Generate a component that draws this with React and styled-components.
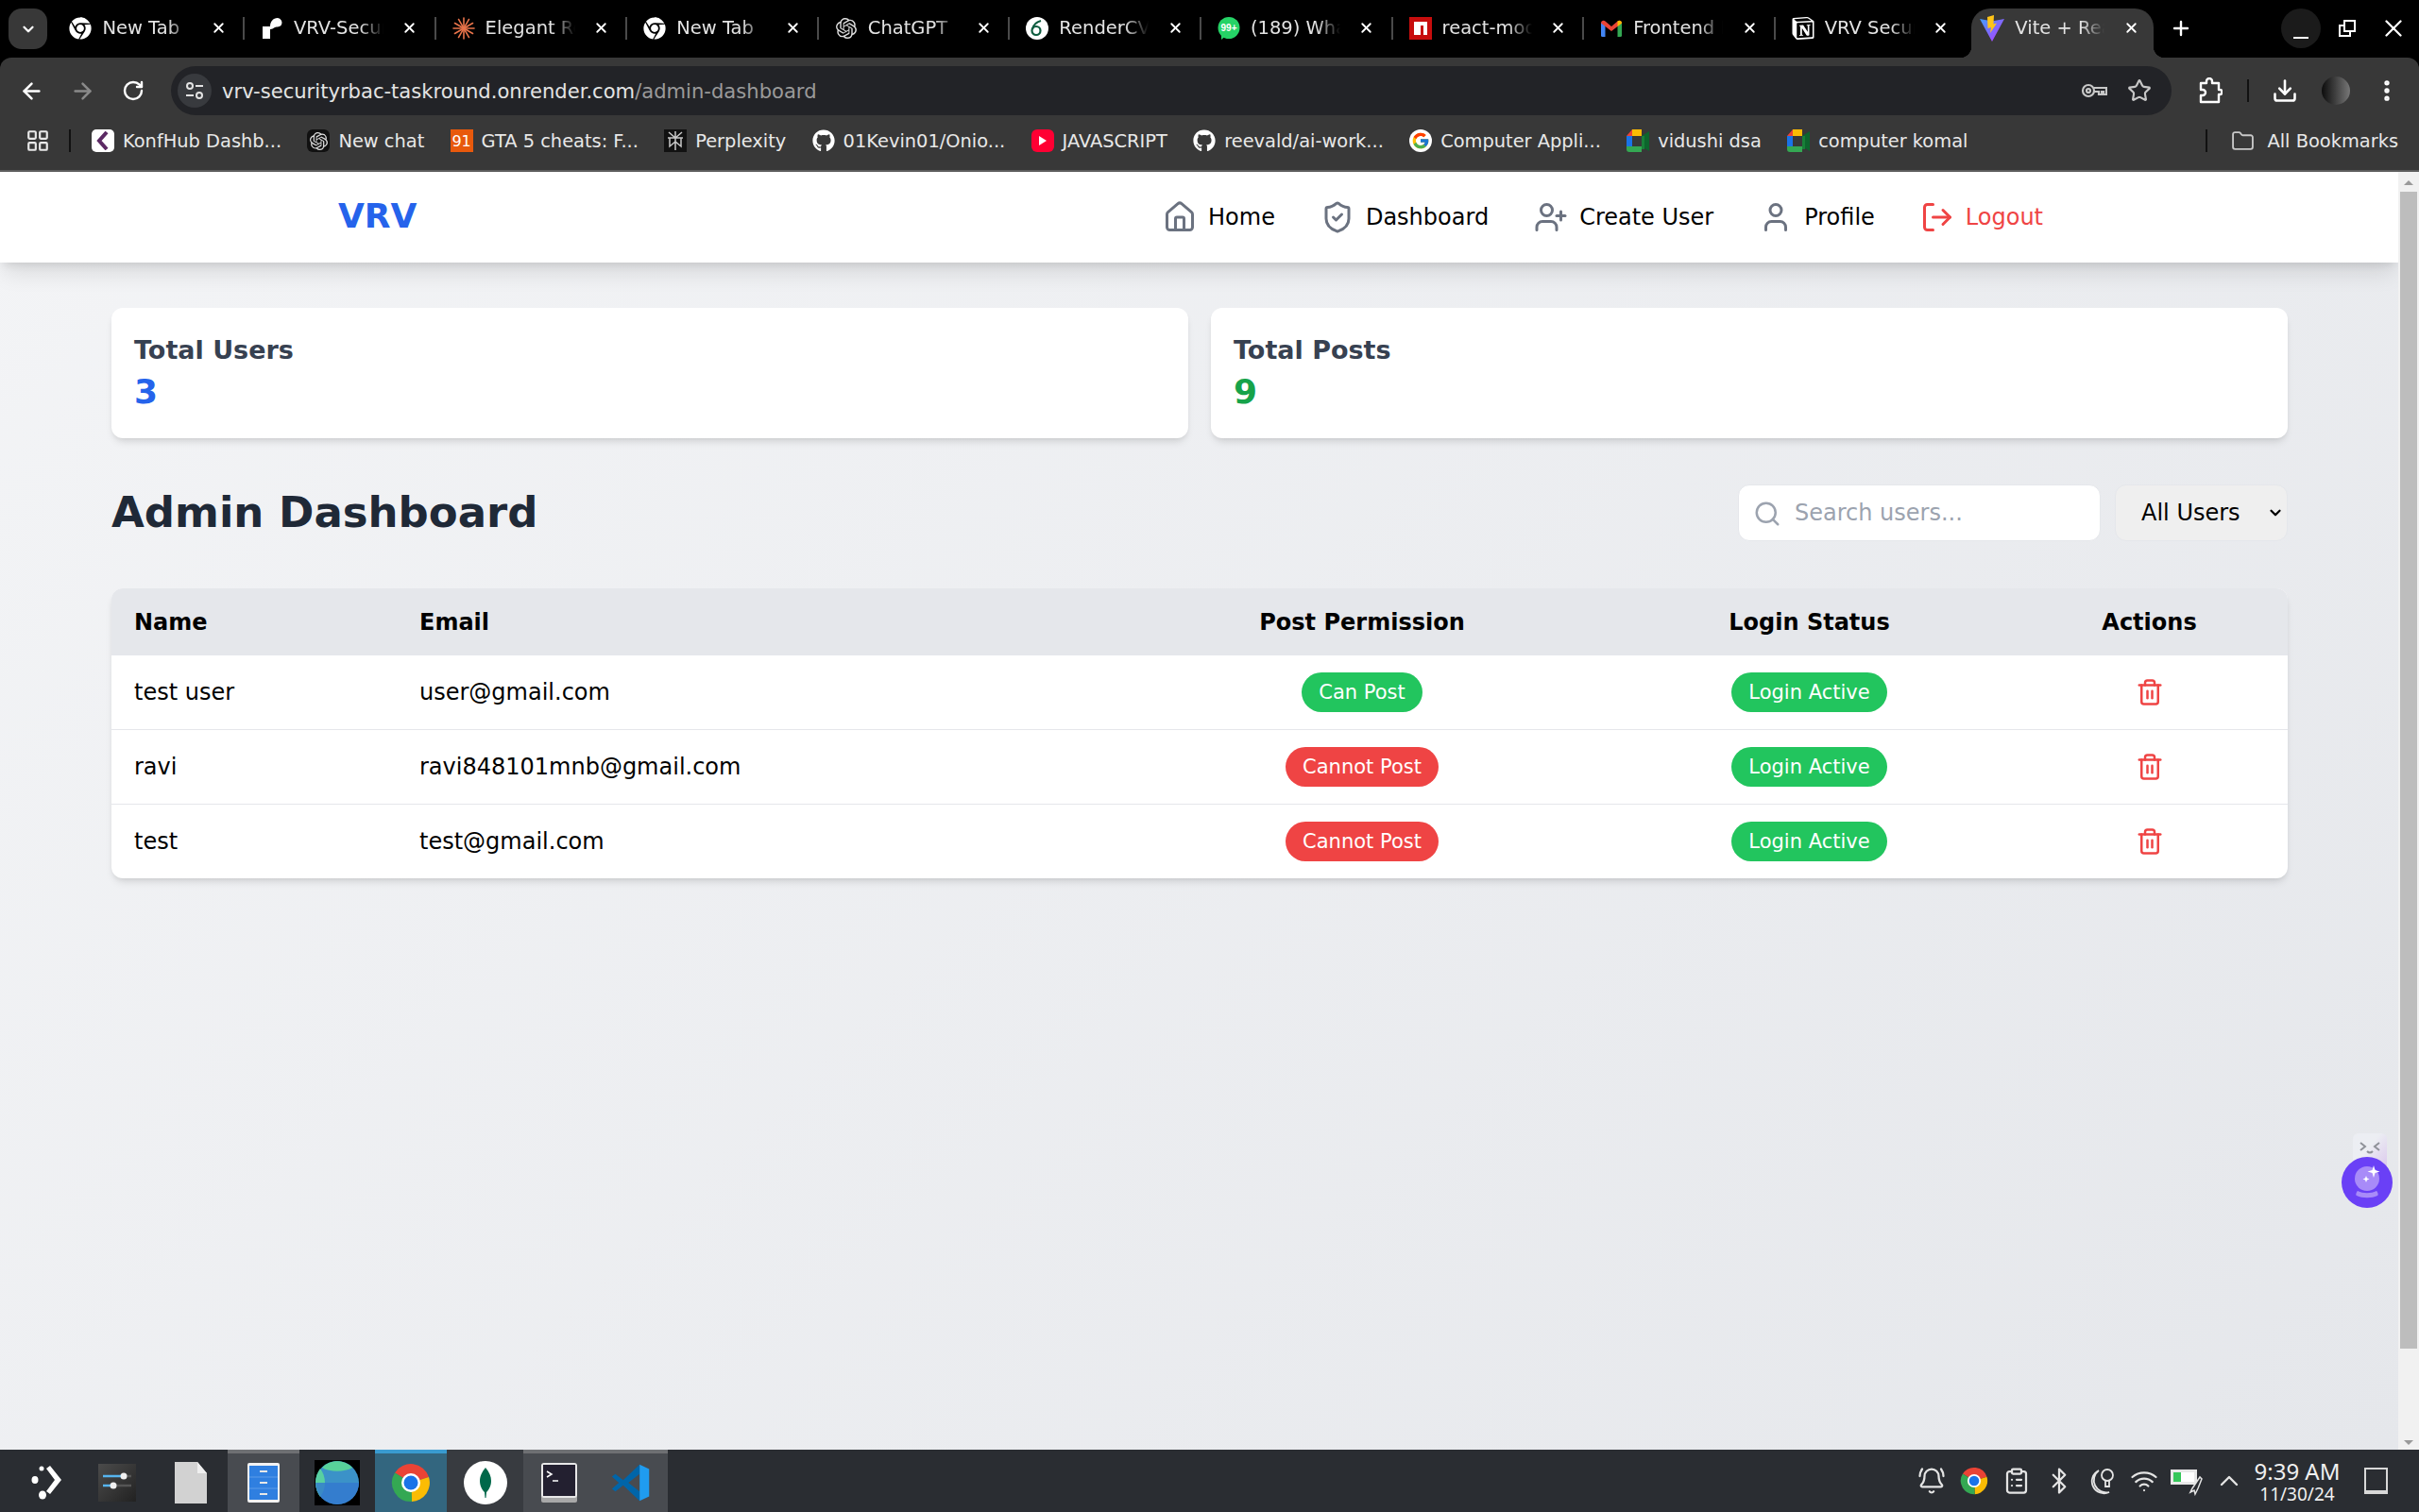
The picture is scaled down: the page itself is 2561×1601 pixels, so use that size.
import React from "react";
import styled, { createGlobalStyle } from "styled-components";
import {
	ArrowLeft,
	ArrowRight,
	BellRing,
	Bluetooth,
	ChevronDown,
	ChevronUp,
	ClipboardList,
	Download,
	Folder,
	House,
	LayoutGrid,
	LogOut,
	MoreVertical,
	Plus,
	RotateCw,
	Search,
	ShieldCheck,
	Star,
	Trash2,
	User,
	UserPlus,
	Wifi,
	X
} from "lucide-react";
import { FaChrome, FaGithub } from "react-icons/fa";
import { FcGoogle } from "react-icons/fc";
import { SiNotion, SiOpenai } from "react-icons/si";

const GlobalStyle = createGlobalStyle`
	html, body {
		margin: 0;
		padding: 0;
		background: #000;
		overflow: hidden;
	}
	* {
		box-sizing: border-box;
	}
`;

const Screen = styled.div`
	display: flex;
	flex-direction: column;
	width: 2561px;
	height: 1601px;
	overflow: hidden;
	font-family: "DejaVu Sans", sans-serif;
`;

/* browser chrome */
const TabStrip = styled.div`
	display: flex;
	align-items: stretch;
	height: 61px;
	padding: 0 6px 0 9px;
	background: #000;
`;
const TabListButton = styled.div`
	display: flex;
	align-items: center;
	justify-content: center;
	width: 41px;
	height: 43px;
	margin: 9px 6.4px 0 0;
	border-radius: 14px;
	background: #383838;
	color: #fff;
`;
const Tab = styled.div`
	position: relative;
	display: flex;
	align-items: center;
	flex: 0 0 202.6px;
	padding: 0 0 2px ${props => (props.$active ? "14px" : "17px")};
	color: #e3e3e3;
	font-size: 19.5px;
`;
const ActiveTabShape = styled.div`
	position: absolute;
	top: 9px;
	bottom: 0;
	left: 5px;
	right: 5px;
	border-radius: 20px 20px 0 0;
	background: #383838;
	&::before,
	&::after {
		content: "";
		position: absolute;
		bottom: 0;
		width: 12px;
		height: 12px;
	}
	&::before {
		left: -12px;
		background: radial-gradient(circle at 0 0, #000 12px, #383838 12.5px);
	}
	&::after {
		right: -12px;
		background: radial-gradient(circle at 100% 0, #000 12px, #383838 12.5px);
	}
`;
const TabIcon = styled.div`
	position: relative;
	display: flex;
	align-items: center;
	justify-content: center;
	flex: 0 0 24px;
	height: 24px;
`;
const TabTitle = styled.div`
	position: relative;
	flex: 0 0 97px;
	margin-left: 11px;
	overflow: hidden;
	white-space: nowrap;
	mask-image: linear-gradient(to right, #000 72%, transparent 98%);
`;
const TabClose = styled.div`
	position: relative;
	display: flex;
	align-items: center;
	justify-content: center;
	flex: 0 0 20px;
	margin-left: 16px;
	color: #fff;
`;
const TabSeparator = styled.div`
	width: 2px;
	height: 24px;
	margin-left: auto;
	background: ${props => (props.$hidden ? "transparent" : "#4a4a4a")};
`;
const NewTab = styled.div`
	display: flex;
	align-items: center;
	justify-content: center;
	width: 48px;
	padding-bottom: 2px;
	color: #fff;
`;
const WindowButtons = styled.div`
	display: flex;
	margin-left: auto;
	padding-top: 9px;
`;
const WindowButton = styled.div`
	display: flex;
	align-items: ${props => (props.$min ? "flex-end" : "center")};
	justify-content: center;
	width: 42px;
	height: 42px;
	margin-left: 7px;
	padding-bottom: ${props => (props.$min ? "10px" : "0")};
	border-radius: 50%;
	background: ${props => (props.$min ? "#1b1b1b" : "transparent")};
	color: #fff;
`;
const MinimizeLine = styled.div`
	width: 16px;
	height: 2px;
	background: #fff;
`;

const Toolbar = styled.div`
	display: flex;
	align-items: center;
	height: 61px;
	padding: 9px 7px 0 6px;
	border-radius: 12px 12px 0 0;
	background: #383838;
`;
const ToolButton = styled.div`
	display: flex;
	align-items: center;
	justify-content: center;
	flex: 0 0 54px;
	color: ${props => props.$color || "#fff"};
`;
const AddressBar = styled.div`
	display: flex;
	align-items: center;
	flex: 1;
	height: 52px;
	margin: 0 14px 0 13px;
	padding: 0 21px 0 7px;
	border-radius: 26px;
	background: #222327;
`;
const SiteInfo = styled.div`
	display: flex;
	align-items: center;
	justify-content: center;
	flex: 0 0 36px;
	height: 36px;
	border-radius: 50%;
	background: #383a3e;
`;
const Url = styled.div`
	flex: 1;
	margin-left: 11px;
	color: #e3e3e3;
	font-size: 21.1px;
	white-space: nowrap;
`;
const UrlPath = styled.span`
	color: #9a9a9a;
`;
const AddressAction = styled.div`
	display: flex;
	align-items: center;
	margin-left: 21px;
	color: #c7c7c7;
`;
const ToolbarDivider = styled.div`
	flex: 0 0 2px;
	height: 24px;
	margin: 0 11px 0 12px;
	background: #111;
`;
const Avatar = styled.div`
	width: 30px;
	height: 30px;
	border-radius: 50%;
	background: linear-gradient(to right, #0c0c0c, #777);
`;

const BookmarksBar = styled.div`
	display: flex;
	align-items: center;
	height: 60px;
	padding: 0 22px 4px 27px;
	border-bottom: 2px solid #5e5e5e;
	background: #383838;
	color: #e8e8e8;
	font-size: 19.4px;
`;
const BarDivider = styled.div`
	flex: 0 0 2px;
	height: 24px;
	margin: ${props => props.$margin};
	background: #111;
`;
const Bookmark = styled.div`
	display: flex;
	align-items: center;
	gap: 9px;
	margin-right: 27.3px;
	white-space: nowrap;
`;
const BookmarkIcon = styled.div`
	display: flex;
	align-items: center;
	justify-content: center;
	flex: 0 0 24px;
	height: 24px;
	border-radius: ${props => props.$radius || "0"};
	background: ${props => props.$bg || "transparent"};
	color: ${props => props.$color || "#fff"};
	font-size: ${props => props.$size || "inherit"};
`;
const AllBookmarks = styled.div`
	display: flex;
	align-items: center;
	margin-left: auto;
	gap: 13px;
	color: #c7c7c7;
`;
const AllBookmarksLabel = styled.span`
	color: #e8e8e8;
`;

/* page */
const Viewport = styled.div`
	position: relative;
	display: flex;
	flex: 1;
	min-height: 0;
`;
const Page = styled.div`
	flex: 1;
	min-width: 0;
	background: linear-gradient(135deg, #f3f4f6, #e5e7eb);
`;
const Navbar = styled.nav`
	display: flex;
	align-items: center;
	height: 96px;
	padding: 0 376px 0 358px;
	background: #fff;
	box-shadow: 0 15px 22px -4px rgba(0, 0, 0, 0.1), 0 6px 9px -4px rgba(0, 0, 0, 0.1);
`;
const Logo = styled.div`
	padding-bottom: 3px;
	color: #2563eb;
	font-size: 36px;
	font-weight: 700;
`;
const NavLinks = styled.div`
	display: flex;
	align-items: center;
	gap: 48px;
	margin-left: auto;
`;
const NavLink = styled.div`
	display: flex;
	align-items: center;
	gap: 12px;
	color: ${props => (props.$danger ? "#ef4444" : "#000")};
	font-size: 24px;
	svg {
		color: ${props => (props.$danger ? "#ef4444" : "#6b7280")};
	}
`;
const Main = styled.main`
	padding: 48px 117px 0 118px;
`;
const Stats = styled.div`
	display: grid;
	grid-template-columns: 1fr 1fr;
	gap: 24px;
	margin-bottom: 49px;
`;
const StatCard = styled.div`
	height: 138px;
	padding: 24px;
	border-radius: 12px;
	background: #fff;
	box-shadow: 0 6px 9px -2px rgba(0, 0, 0, 0.1), 0 3px 6px -3px rgba(0, 0, 0, 0.1);
`;
const StatTitle = styled.div`
	color: #374151;
	font-size: 27px;
	font-weight: 700;
	line-height: 41px;
`;
const StatValue = styled.div`
	color: ${props => props.$color};
	font-size: 36px;
	font-weight: 700;
	line-height: 48px;
`;
const HeaderRow = styled.div`
	display: flex;
	align-items: center;
	justify-content: space-between;
	margin-bottom: 50px;
`;
const Heading = styled.h1`
	margin: 0;
	padding-bottom: 2px;
	color: #1f2937;
	font-size: 45px;
	font-weight: 700;
`;
const Filters = styled.div`
	display: flex;
	gap: 15px;
`;
const SearchBox = styled.div`
	position: relative;
	width: 384px;
	height: 60px;
`;
const SearchIcon = styled.div`
	position: absolute;
	top: 16px;
	left: 16px;
	display: flex;
	color: #9ca3af;
`;
const SearchInput = styled.input`
	width: 100%;
	height: 100%;
	padding: 0 18px 0 59px;
	border: 1.5px solid #e5e7eb;
	border-radius: 12px;
	outline: none;
	background: #fff;
	color: #000;
	font-family: inherit;
	font-size: 24px;
	&::placeholder {
		color: #9ca3af;
		opacity: 1;
	}
`;
const SelectBox = styled.div`
	position: relative;
	width: 183px;
	height: 60px;
`;
const Select = styled.select`
	width: 100%;
	height: 100%;
	padding: 0 0 0 27px;
	border: 1.5px solid #e5e7eb;
	border-radius: 12px;
	outline: none;
	appearance: none;
	background: #efefef;
	color: #000;
	font-family: inherit;
	font-size: 24px;
`;
const SelectChevron = styled.div`
	position: absolute;
	top: 21px;
	right: 4px;
	display: flex;
	color: #000;
`;
const TableCard = styled.div`
	overflow: hidden;
	border-radius: 12px;
	background: #fff;
	box-shadow: 0 6px 9px -2px rgba(0, 0, 0, 0.1), 0 3px 6px -3px rgba(0, 0, 0, 0.1);
`;
const Table = styled.table`
	width: 100%;
	border-collapse: collapse;
	table-layout: fixed;
`;
const HeadCell = styled.th`
	width: ${props => props.$width}px;
	height: 71px;
	padding: 0 24px;
	background: #e5e7eb;
	color: #000;
	font-size: 24px;
	font-weight: 700;
	text-align: ${props => (props.$center ? "center" : "left")};
`;
const Row = styled.tr`
	border-top: ${props => (props.$first ? "none" : "1px solid #e5e7eb")};
`;
const Cell = styled.td`
	height: ${props => (props.$first ? "78px" : "79px")};
	padding: 0 24px;
	color: #000;
	font-size: 24px;
	text-align: ${props => (props.$center ? "center" : "left")};
`;
const Pill = styled.span`
	display: inline-block;
	height: 42px;
	padding: 0 18px;
	border-radius: 21px;
	background: ${props => (props.$ok ? "#22c55e" : "#ef4444")};
	color: #fff;
	font-size: 21px;
	line-height: 42px;
	vertical-align: middle;
`;
const DeleteButton = styled.span`
	display: inline-flex;
	color: #ef4444;
	vertical-align: middle;
`;
const Scrollbar = styled.div`
	display: flex;
	flex-direction: column;
	align-items: center;
	flex: 0 0 22px;
	padding-top: 9px;
	background: #f1f1f1;
`;
const ScrollArrow = styled.div`
	width: 0;
	height: 0;
	border-left: 5px solid transparent;
	border-right: 5px solid transparent;
	border-${props => (props.$down ? "top" : "bottom")}: 5px solid #9a9a9a;
`;
const ScrollThumb = styled.div`
	width: 18px;
	height: 1225px;
	margin: 7px 0 auto;
	background: #bdbdbd;
`;
const ScrollEnd = styled.div`
	margin-bottom: 5px;
`;
const AssistantWidget = styled.div`
	position: absolute;
	top: 1014px;
	right: 26px;
	display: flex;
`;

/* desktop panel */
const Taskbar = styled.div`
	display: flex;
	align-items: stretch;
	flex: 0 0 66px;
	background: #2a2d32;
`;
const TaskItem = styled.div`
	display: flex;
	align-items: center;
	justify-content: center;
	flex: 0 0 ${props => props.$width || 78}px;
	padding-left: ${props => props.$pad || 0}px;
	border-top: 4px solid ${props => props.$strip || "transparent"};
	background: ${props => props.$bg || "transparent"};
`;
const Tray = styled.div`
	display: flex;
	align-items: center;
	margin-left: auto;
	padding-right: 33px;
	color: #e4e4e4;
`;
const TrayIcon = styled.div`
	display: flex;
	align-items: center;
	justify-content: center;
	flex: 0 0 45px;
`;
const Clock = styled.div`
	display: flex;
	flex-direction: column;
	align-items: center;
	width: 100px;
	margin: 0 21px 0 0;
	color: #f0f0f0;
	font-family: "Noto Sans", sans-serif;
`;
const ClockTime = styled.div`
	font-size: 24px;
	line-height: 28px;
`;
const ClockDate = styled.div`
	font-size: 19px;
	line-height: 20px;
`;
const DesktopButton = styled.div`
	width: 25px;
	height: 28px;
	border: 2px solid #d8d8d8;
	border-bottom-width: 4px;
`;

const ChromeColor = ({ size = 40 }) => (
	<svg width={size} height={size} viewBox="0 0 48 48">
		<path fill="#ea4335" d="M24 24 7 13.500A20 20 0 0 1 43 18z" />
		<path fill="#fbbc04" d="M24 24 43 18A20 20 0 0 1 25 44z" />
		<path fill="#34a853" d="M24 24 25 44A20 20 0 0 1 7 13.500z" />
		<circle cx="24" cy="24" r="10" fill="#fff" />
		<circle cx="24" cy="24" r="7.500" fill="#1a73e8" />
	</svg>
);
const RenderLogo = () => (
	<svg width="24" height="24" viewBox="0 0 24 24" fill="#fff">
		<path d="M2 10h8v13H2zM10 10c0-5 3-9 8-9a5 5 0 0 1 4 7c-1 3-5 2-7 3-2 1-3 2-5 2z" />
	</svg>
);
const ElegantLogo = () => (
	<svg width="24" height="24" viewBox="0 0 24 24" stroke="#e8734a" strokeWidth="1.600" strokeLinecap="round">
		{[0, 30, 60, 90, 120, 150].map(angle => (
			<line key={angle} x1="12" y1="1" x2="12" y2="23" transform={`rotate(${angle} 12 12)`} />
		))}
	</svg>
);
const RenderCvLogo = () => (
	<svg width="24" height="24" viewBox="0 0 24 24">
		<circle cx="12" cy="12" r="12" fill="#fff" />
		<circle cx="11" cy="14.500" r="4.500" fill="none" stroke="#0d5c3f" strokeWidth="2.200" />
		<path d="M7 13C8 8 12 5 16 4" fill="none" stroke="#0d5c3f" strokeWidth="2.200" />
	</svg>
);
const WhatsAppBadge = () => (
	<svg width="24" height="24" viewBox="0 0 24 24">
		<circle cx="12" cy="11.500" r="11.500" fill="#25d366" />
		<path d="M4 18h7l-7 6z" fill="#25d366" />
		<text x="12" y="15" textAnchor="middle" fill="#fff" fontSize="10" fontWeight="700" fontFamily="Liberation Sans">99+</text>
	</svg>
);
const NpmLogo = () => (
	<svg width="24" height="24" viewBox="0 0 24 24">
		<rect width="24" height="24" fill="#c70d0d" />
		<path d="M5 5h14v14h-4V9h-3v10H5z" fill="#fff" />
	</svg>
);
const GmailLogo = () => (
	<svg width="24" height="24" viewBox="0 0 24 24">
		<path fill="#4285f4" d="M1 6h4.500v15H2.500A1.500 1.500 0 0 1 1 19.500z" />
		<path fill="#34a853" d="M18.500 6H23v13.500a1.500 1.500 0 0 1-1.500 1.500h-3z" />
		<path fill="#ea4335" d="M1 6.500c0-2.500 2.800-3.500 4.500-2L12 10l6.500-5.500c1.700-1.500 4.500-.5 4.500 2L18.500 10 12 15 5.500 10z" />
		<path fill="#fbbc04" d="M18.500 4.500c1.700-1.500 4.500-.5 4.500 2L18.500 10z" />
	</svg>
);
const ViteLogo = () => (
	<svg width="26" height="28" viewBox="0 0 26 28">
		<defs>
			<linearGradient id="viteBody" x1="0" y1="0" x2="1" y2="1">
				<stop offset="0" stopColor="#41a0ff" />
				<stop offset="1" stopColor="#bd34fe" />
			</linearGradient>
		</defs>
		<path fill="url(#viteBody)" d="M0 4 13 6.500 26 4 13 28z" />
		<path fill="#ffc517" d="M15 0 8 2 8.500 14 12 13 11 19 18 8.500 14.500 9.500z" />
	</svg>
);
const KonfLogo = () => (
	<BookmarkIcon $bg="#fff" $radius="5px">
		<svg width="14" height="20" viewBox="0 0 14 20">
			<path d="M11 1 3 10l8 9" fill="none" stroke="#5c2a64" strokeWidth="4" />
		</svg>
	</BookmarkIcon>
);
const PerplexityLogo = () => (
	<BookmarkIcon $bg="#111">
		<svg width="20" height="22" viewBox="0 0 20 22" stroke="#c8c8c8" strokeWidth="1.500" fill="none">
			<path d="M10 1v20M3 2l7 6 7-6M2 8h16M4 8v9l6-5 6 5V8" />
		</svg>
	</BookmarkIcon>
);
const YoutubeLogo = () => (
	<BookmarkIcon $bg="#ff0033" $radius="6px">
		<svg width="10" height="12" viewBox="0 0 10 12">
			<path d="M1 1l8 5-8 5z" fill="#fff" />
		</svg>
	</BookmarkIcon>
);
const MeetLogo = () => (
	<svg width="24" height="26" viewBox="0 0 24 26">
		<path fill="#fbbc04" d="M6 1h10v7H6z" />
		<path fill="#ea4335" d="M6 1v7H0z" />
		<path fill="#1a73e8" d="M0 8h6v11H0z" />
		<path fill="#0d652d" d="M16 8v11l8 5V3z" />
		<path fill="#34a853" d="M6 19h10v6H3c-2 0-3-1-3-3v-3z" />
		<path fill="#188038" d="M16 8h3v14h-3z" />
	</svg>
);
const SiteInfoGlyph = () => (
	<svg width="20" height="20" viewBox="0 0 20 20" fill="none" stroke="#e3e3e3" strokeWidth="2">
		<circle cx="5" cy="5" r="3" />
		<path d="M11 5h8M1 15h8" />
		<circle cx="15" cy="15" r="3" />
	</svg>
);
const KeyGlyph = () => (
	<svg width="28" height="18" viewBox="0 0 28 18" fill="none" stroke="#c7c7c7" strokeWidth="2.200">
		<circle cx="8" cy="9" r="6" />
		<circle cx="8" cy="9" r="2" />
		<path d="M14 6h13v7h-3v-3h-2v3h-3v-3h-5" />
	</svg>
);
const ExtensionGlyph = () => (
	<svg width="26" height="28" viewBox="0 0 26 28" fill="none" stroke="#fff" strokeWidth="2.400" strokeLinejoin="round">
		<path d="M3 6h6V4a3 3 0 0 1 6 0v2h7v7h1a2.500 2.500 0 0 1 0 5h-1v8H3v-7h2a3 3 0 0 0 0-6H3z" />
	</svg>
);
const RestoreGlyph = () => (
	<svg width="20" height="20" viewBox="0 0 20 20" fill="none" stroke="#fff" strokeWidth="2">
		<rect x="7" y="2" width="11" height="11" />
		<path d="M7 7H2v11h11v-5" />
	</svg>
);
const LauncherGlyph = () => (
	<svg width="36" height="40" viewBox="0 0 36 40" fill="#fff">
		<circle cx="12" cy="5" r="2.500" />
		<ellipse cx="5" cy="17" rx="3.500" ry="4" />
		<ellipse cx="13" cy="33" rx="4" ry="4.500" />
		<path d="M17 2l4-3 12 15-12 15-4-3 9-12z" transform="translate(0 3)" />
	</svg>
);
const SettingsGlyph = () => (
	<svg width="40" height="40" viewBox="0 0 40 40">
		<defs>
			<linearGradient id="settingsBg" x1="0" y1="0" x2="1" y2="1">
				<stop offset="0" stopColor="#4b4b4b" />
				<stop offset="1" stopColor="#222" />
			</linearGradient>
		</defs>
		<rect width="40" height="40" fill="url(#settingsBg)" />
		<path d="M5 13h20M5 23h12" stroke="#56b4ee" strokeWidth="2.500" />
		<path d="M25 13h10M17 23h18" stroke="#555" strokeWidth="2.500" />
		<circle cx="27" cy="13" r="3.500" fill="#f0f0f0" />
		<circle cx="16" cy="23" r="3.500" fill="#f0f0f0" />
	</svg>
);
const FileGlyph = () => (
	<svg width="34" height="44" viewBox="0 0 34 44">
		<path fill="#d2d2d2" d="M0 0h24l10 12v32H0z" />
		<path fill="#efefef" d="M24 0l10 12H24z" />
	</svg>
);
const CabinetGlyph = () => (
	<svg width="34" height="42" viewBox="0 0 34 42">
		<rect x="0" y="0" width="34" height="42" rx="2" fill="#f2f2f2" />
		<rect x="2" y="3" width="30" height="36" fill="#2f7fe0" />
		<path d="M2 15h30M2 27h30" stroke="#5d9ce8" />
		<path d="M13 8h8v2h-8zM13 20h8v2h-8zM13 32h8v2h-8z" fill="#e8e8e8" />
	</svg>
);
const GlobeGlyph = () => (
	<svg width="48" height="48" viewBox="0 0 48 48">
		<rect width="48" height="48" fill="#000" />
		<circle cx="24" cy="24" r="23" fill="#3b92c8" />
		<path d="M8 8c8-9 24-9 32 0-8 5-24 5-32 0z" fill="#58d29a" />
		<path d="M1 24c0-6 2-11 5-15 3 4 5 9 5 15s-2 11-5 15c-3-4-5-9-5-15z" fill="#58d0a0" />
		<path d="M1 24h46a23 23 0 0 1-46 0z" fill="#3378d0" opacity=".8" />
	</svg>
);
const MongoGlyph = () => (
	<svg width="46" height="46" viewBox="0 0 46 46">
		<circle cx="23" cy="23" r="23" fill="#fff" />
		<path fill="#00684a" d="M23 7c4 5 6 9 6 14 0 6-3 10-5 12l-.5 6h-1l-.5-6c-2-2-5-6-5-12 0-5 2-9 6-14z" />
	</svg>
);
const TerminalGlyph = () => (
	<svg width="38" height="42" viewBox="0 0 38 42">
		<rect x="0" y="34" width="38" height="8" rx="2" fill="#a8a8a8" />
		<rect x="0" y="0" width="38" height="37" rx="3" fill="#e8e8e8" />
		<rect x="2" y="2" width="34" height="33" fill="#232030" />
		<path d="M6 9l5 3-5 3" stroke="#fff" strokeWidth="1.500" fill="none" />
		<path d="M12 19h6" stroke="#fff" strokeWidth="1.500" />
	</svg>
);
const VscodeGlyph = () => (
	<svg width="44" height="44" viewBox="0 0 24 24">
		<path fill="#0065a9" d="M17 1.500 7.500 10.500 3 7 1 8.500l4 3.500-4 3.500L3 17l4.500-3.500 9.500 9v-5.500L10.500 12 17 7z" />
		<path fill="#1f9cf0" d="M17 1.500l5.500 2.600v15.800L17 22.500z" />
	</svg>
);
const MoonBulbGlyph = () => (
	<svg width="32" height="32" viewBox="0 0 32 32" fill="none" stroke="#e4e4e4" strokeWidth="1.800">
		<path d="M13 5A12 12 0 1 0 24 28 13 13 0 0 1 13 5z" />
		<circle cx="22" cy="10" r="6" />
		<path d="M20 16v6h4v-6" />
	</svg>
);
const BatteryGlyph = () => (
	<svg width="36" height="32" viewBox="0 0 36 32">
		<rect x="1" y="4" width="28" height="16" fill="#e8e8e8" />
		<rect x="4" y="7" width="8" height="10" fill="#36c75a" />
		<rect x="12" y="7" width="14" height="10" fill="#fff" />
		<path d="M24 24l8-12 2 2-4 10-3 6-1-4-4 2z" fill="#2a2d32" stroke="#e4e4e4" strokeWidth="1.500" />
	</svg>
);
const AssistantGlyph = () => (
	<svg width="56" height="90" viewBox="0 0 56 90">
		<defs>
			<linearGradient id="ghost" x1="0" y1="0" x2="1" y2="1">
				<stop offset="0.4" stopColor="#eceef3" />
				<stop offset="1" stopColor="#d9c2ec" />
			</linearGradient>
		</defs>
		<rect x="12" y="4" width="36" height="44" rx="6" fill="url(#ghost)" />
		<path d="M20 14l5 4-5 4M40 14l-5 4 5 4M27 23q3 3 6 0" fill="none" stroke="#8f9299" strokeWidth="2" />
		<g transform="translate(-1 -6)">
			<circle cx="28" cy="62" r="27" fill="#6a40f6" />
			<circle cx="28" cy="58" r="13" fill="#a88bf8" />
			<path d="M18 71c6 3 14 3 20 0 2 2 2 5 1 5-6 3-16 3-22 0-1 0-1-3 1-5z" fill="#a88bf8" />
			<path d="M35 44l1.500 5 5 1.500-5 1.500-1.500 5-1.500-5-5-1.500 5-1.500z" fill="#fff" />
			<path d="M27 55l1 2.500 2.500 1-2.500 1-1 2.500-1-2.500-2.500-1 2.500-1z" fill="#fff" />
		</g>
	</svg>
);

const tabs = [
	{ title: "New Tab", icon: <FaChrome size={24} color="#fff" /> },
	{ title: "VRV-Security", icon: <RenderLogo /> },
	{ title: "Elegant Resume", icon: <ElegantLogo /> },
	{ title: "New Tab", icon: <FaChrome size={24} color="#fff" /> },
	{ title: "ChatGPT", icon: <SiOpenai size={22} color="#ddd" /> },
	{ title: "RenderCV", icon: <RenderCvLogo /> },
	{ title: "(189) WhatsApp", icon: <WhatsAppBadge /> },
	{ title: "react-modal", icon: <NpmLogo /> },
	{ title: "Frontend Intern", icon: <GmailLogo /> },
	{ title: "VRV Security", icon: <SiNotion size={24} color="#fff" />, noSeparator: true },
	{ title: "Vite + React", icon: <ViteLogo />, active: true, noSeparator: true }
];

const bookmarks = [
	{ label: "KonfHub Dashb...", icon: <KonfLogo /> },
	{ label: "New chat", icon: <BookmarkIcon $bg="#111" $radius="6px"><SiOpenai size={19} color="#ddd" /></BookmarkIcon> },
	{ label: "GTA 5 cheats: F...", icon: <BookmarkIcon $bg="#e8590c" $size="16px">91</BookmarkIcon> },
	{ label: "Perplexity", icon: <PerplexityLogo /> },
	{ label: "01Kevin01/Onio...", icon: <FaGithub size={24} color="#fff" /> },
	{ label: "JAVASCRIPT", icon: <YoutubeLogo /> },
	{ label: "reevald/ai-work...", icon: <FaGithub size={24} color="#fff" /> },
	{ label: "Computer Appli...", icon: <BookmarkIcon $bg="#fff" $radius="50%"><FcGoogle size={20} /></BookmarkIcon> },
	{ label: "vidushi dsa", icon: <MeetLogo /> },
	{ label: "computer komal", icon: <MeetLogo /> }
];

const navLinks = [
	{ label: "Home", Icon: House },
	{ label: "Dashboard", Icon: ShieldCheck },
	{ label: "Create User", Icon: UserPlus },
	{ label: "Profile", Icon: User },
	{ label: "Logout", Icon: LogOut, danger: true }
];

const users = [
	{ name: "test user", email: "user@gmail.com", canPost: true },
	{ name: "ravi", email: "ravi848101mnb@gmail.com", canPost: false },
	{ name: "test", email: "test@gmail.com", canPost: false }
];

const taskItems = [
	{ glyph: <LauncherGlyph />, width: 86, pad: 13 },
	{ glyph: <SettingsGlyph />, width: 76 },
	{ glyph: <FileGlyph />, width: 79 },
	{ glyph: <CabinetGlyph />, width: 76, bg: "#484b50", strip: "#6e7073" },
	{ glyph: <GlobeGlyph />, width: 80 },
	{ glyph: <ChromeColor size={48} />, width: 76, bg: "#33667f", strip: "#3a9bd0" },
	{ glyph: <MongoGlyph />, width: 81, bg: "#383b40" },
	{ glyph: <TerminalGlyph />, width: 75, bg: "#484b50", strip: "#6e7073" },
	{ glyph: <VscodeGlyph />, width: 78, bg: "#484b50", strip: "#6e7073" }
];

export default function App() {
	return (
		<Screen>
			<GlobalStyle />
			<TabStrip>
				<TabListButton>
					<ChevronDown size={18} strokeWidth={3} />
				</TabListButton>
				{tabs.map((tab, index) => (
					<Tab key={index} $active={tab.active}>
						{tab.active && <ActiveTabShape />}
						<TabIcon>{tab.icon}</TabIcon>
						<TabTitle>{tab.title}</TabTitle>
						<TabClose>
							<X size={17} strokeWidth={2.6} />
						</TabClose>
						<TabSeparator $hidden={tab.noSeparator} />
					</Tab>
				))}
				<NewTab>
					<Plus size={24} strokeWidth={2.4} />
				</NewTab>
				<WindowButtons>
					<WindowButton $min>
						<MinimizeLine />
					</WindowButton>
					<WindowButton>
						<RestoreGlyph />
					</WindowButton>
					<WindowButton>
						<X size={30} strokeWidth={1.8} />
					</WindowButton>
				</WindowButtons>
			</TabStrip>
			<Toolbar>
				<ToolButton>
					<ArrowLeft size={27} strokeWidth={2.2} />
				</ToolButton>
				<ToolButton $color="#8a8a8a">
					<ArrowRight size={27} strokeWidth={2.2} />
				</ToolButton>
				<ToolButton>
					<RotateCw size={24} strokeWidth={2.4} />
				</ToolButton>
				<AddressBar>
					<SiteInfo>
						<SiteInfoGlyph />
					</SiteInfo>
					<Url>
						vrv-securityrbac-taskround.onrender.com<UrlPath>/admin-dashboard</UrlPath>
					</Url>
					<AddressAction>
						<KeyGlyph />
					</AddressAction>
					<AddressAction>
						<Star size={26} strokeWidth={2} />
					</AddressAction>
				</AddressBar>
				<ToolButton>
					<ExtensionGlyph />
				</ToolButton>
				<ToolbarDivider />
				<ToolButton>
					<Download size={28} strokeWidth={2.2} />
				</ToolButton>
				<ToolButton>
					<Avatar />
				</ToolButton>
				<ToolButton>
					<MoreVertical size={28} strokeWidth={2.6} />
				</ToolButton>
			</Toolbar>
			<BookmarksBar>
				<LayoutGrid size={26} strokeWidth={2} />
				<BarDivider $margin="0 22px 0 20px" />
				{bookmarks.map(bookmark => (
					<Bookmark key={bookmark.label}>
						{bookmark.icon}
						{bookmark.label}
					</Bookmark>
				))}
				<AllBookmarks>
					<BarDivider $margin="0 12px 0 0" />
					<Folder size={25} strokeWidth={1.8} />
					<AllBookmarksLabel>All Bookmarks</AllBookmarksLabel>
				</AllBookmarks>
			</BookmarksBar>
			<Viewport>
				<Page>
					<Navbar>
						<Logo>VRV</Logo>
						<NavLinks>
							{navLinks.map(({ label, Icon, danger }) => (
								<NavLink key={label} $danger={danger}>
									<Icon size={36} strokeWidth={2} />
									{label}
								</NavLink>
							))}
						</NavLinks>
					</Navbar>
					<Main>
						<Stats>
							<StatCard>
								<StatTitle>Total Users</StatTitle>
								<StatValue $color="#2563eb">3</StatValue>
							</StatCard>
							<StatCard>
								<StatTitle>Total Posts</StatTitle>
								<StatValue $color="#16a34a">9</StatValue>
							</StatCard>
						</Stats>
						<HeaderRow>
							<Heading>Admin Dashboard</Heading>
							<Filters>
								<SearchBox>
									<SearchIcon>
										<Search size={30} strokeWidth={2} />
									</SearchIcon>
									<SearchInput placeholder="Search users..." readOnly />
								</SearchBox>
								<SelectBox>
									<Select defaultValue="all">
										<option value="all">All Users</option>
									</Select>
									<SelectChevron>
										<ChevronDown size={18} strokeWidth={3} />
									</SelectChevron>
								</SelectBox>
							</Filters>
						</HeaderRow>
						<TableCard>
							<Table>
								<thead>
									<tr>
										<HeadCell $width={302}>Name</HeadCell>
										<HeadCell $width={762}>Email</HeadCell>
										<HeadCell $width={520} $center>Post Permission</HeadCell>
										<HeadCell $width={427} $center>Login Status</HeadCell>
										<HeadCell $width={293} $center>Actions</HeadCell>
									</tr>
								</thead>
								<tbody>
									{users.map((user, index) => (
										<Row key={user.email} $first={index === 0}>
											<Cell $first={index === 0}>{user.name}</Cell>
											<Cell $first={index === 0}>{user.email}</Cell>
											<Cell $first={index === 0} $center>
												<Pill $ok={user.canPost}>{user.canPost ? "Can Post" : "Cannot Post"}</Pill>
											</Cell>
											<Cell $first={index === 0} $center>
												<Pill $ok>Login Active</Pill>
											</Cell>
											<Cell $first={index === 0} $center>
												<DeleteButton>
													<Trash2 size={30} strokeWidth={2} />
												</DeleteButton>
											</Cell>
										</Row>
									))}
								</tbody>
							</Table>
						</TableCard>
					</Main>
				</Page>
				<Scrollbar>
					<ScrollArrow />
					<ScrollThumb />
					<ScrollEnd>
						<ScrollArrow $down />
					</ScrollEnd>
				</Scrollbar>
				<AssistantWidget>
					<AssistantGlyph />
				</AssistantWidget>
			</Viewport>
			<Taskbar>
				{taskItems.map((item, index) => (
					<TaskItem key={index} $width={item.width} $pad={item.pad} $bg={item.bg} $strip={item.strip}>
						{item.glyph}
					</TaskItem>
				))}
				<Tray>
					<TrayIcon><BellRing size={30} strokeWidth={1.8} /></TrayIcon>
					<TrayIcon><ChromeColor size={34} /></TrayIcon>
					<TrayIcon><ClipboardList size={30} strokeWidth={1.8} /></TrayIcon>
					<TrayIcon><Bluetooth size={30} strokeWidth={1.8} /></TrayIcon>
					<TrayIcon><MoonBulbGlyph /></TrayIcon>
					<TrayIcon><Wifi size={30} strokeWidth={1.8} /></TrayIcon>
					<TrayIcon><BatteryGlyph /></TrayIcon>
					<TrayIcon><ChevronUp size={32} strokeWidth={1.8} /></TrayIcon>
					<Clock>
						<ClockTime>9:39 AM</ClockTime>
						<ClockDate>11/30/24</ClockDate>
					</Clock>
					<DesktopButton />
				</Tray>
			</Taskbar>
		</Screen>
	);
}
